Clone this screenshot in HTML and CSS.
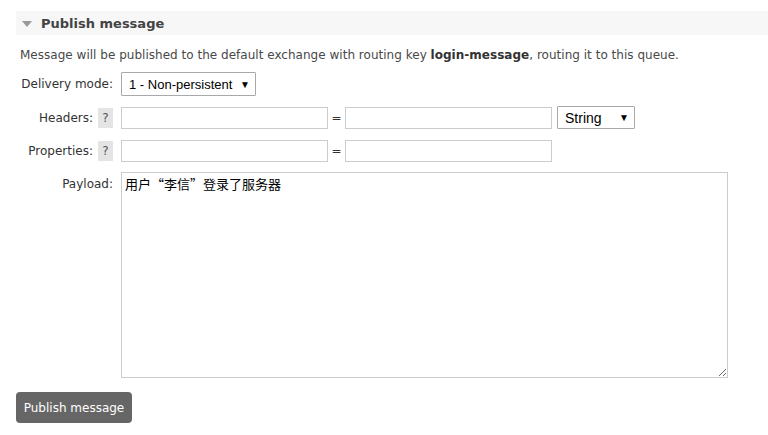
FILE: index.html
```html
<!DOCTYPE html>
<html>
<head>
<meta charset="utf-8">
<link rel="stylesheet" href="styles.css">
</head>
<body>
<div class="section">
  <div class="section-head">
    <span class="tri"></span>
    <h2>Publish message</h2>
  </div>
  <p class="intro">Message will be published to the default exchange with routing key <b>login-message</b>, routing it to this queue.</p>
  <div class="form">
    <div class="row row-mode">
      <label class="lbl">Delivery mode:</label>
      <div class="sel sel-mode"><span>1 - Non-persistent</span><span class="arr">&#9660;</span></div>
    </div>
    <div class="row row-hdr">
      <label class="lbl">Headers: <span class="help">?</span></label>
      <input class="txt" type="text">
      <span class="eq">=</span>
      <input class="txt" type="text">
      <div class="sel sel-type"><span>String</span><span class="arr">&#9660;</span></div>
    </div>
    <div class="row row-prop">
      <label class="lbl">Properties: <span class="help">?</span></label>
      <input class="txt" type="text">
      <span class="eq">=</span>
      <input class="txt" type="text">
    </div>
    <div class="row row-pay">
      <label class="lbl lbl-top">Payload:</label>
      <textarea class="payload">用户“李信”登录了服务器</textarea>
    </div>
  </div>
  <button class="btn">Publish message</button>
</div>
</body>
</html>
```
FILE: styles.css
```css
html, body { margin: 0; padding: 0; background: #fff; }
body {
  font-family: "DejaVu Sans", Verdana, sans-serif;
  font-size: 12px;
  color: #484848;
}
.section { padding: 11px 0 0 16px; }
.section-head {
  display: flex;
  align-items: center;
  height: 24px;
  background: #f7f7f7;
  padding-left: 6px;
}
.tri {
  width: 0; height: 0;
  border-left: 5px solid transparent;
  border-right: 5px solid transparent;
  border-top: 6px solid #999;
  margin-right: 9px;
  margin-top: 1px;
}
h2 {
  margin: 0;
  font-size: 13px;
  font-weight: bold;
  color: #444;
}
.intro {
  margin: 12px 0 0 4px;
  line-height: 16px;
  letter-spacing: 0.02px;
}
.intro b { color: #333; }
.form { margin-top: 9px; display: flex; flex-direction: column; }
.row { display: flex; align-items: center; }
.lbl {
  width: 97px;
  flex: none;
  text-align: right;
  color: #333;
  margin-right: 8px;
  display: flex;
  align-items: center;
  justify-content: flex-end;
}
.lbl-top { align-self: flex-start; margin-top: 5px; }
.help {
  display: inline-block;
  width: 15px; height: 20px;
  line-height: 20px;
  text-align: center;
  background: #e4e4e4;
  color: #555;
  margin-left: 5px;
}
.sel {
  box-sizing: border-box;
  display: flex;
  align-items: center;
  justify-content: space-between;
  border: 1px solid #a9a9a9;
  border-radius: 1px;
  background: #fff;
  font-family: "Liberation Sans", Arial, sans-serif;
  font-size: 13px;
  color: #000;
}
.sel-mode { width: 135px; height: 24px; padding: 0 5px 0 7px; }
.sel-type { width: 78px; height: 23px; padding: 0 5px 0 7px; margin-left: 5px; font-size: 14px; }
.arr { font-size: 10px; }
.row-mode { margin-top: 0; }
.row-hdr { margin-top: 10px; }
.row-prop { margin-top: 11px; }
.row-pay { margin-top: 10px; }
.txt {
  box-sizing: border-box;
  width: 207px;
  height: 22px;
  border: 1px solid #ccc;
  margin: 0;
  padding: 0 4px;
  font-size: 12px;
}
.eq { width: 17px; text-align: center; color: #333; }
.payload {
  box-sizing: border-box;
  width: 607px;
  height: 206px;
  margin: 0;
  border: 1px solid #ccc;
  padding: 2px 3px;
  font-family: "Noto Sans CJK SC", sans-serif;
  font-size: 13px;
  color: #000;
  line-height: 18px;
  resize: both;
}
.btn {
  margin-top: 14px;
  width: 116px;
  height: 31px;
  border: none;
  border-radius: 4px;
  background: #666;
  color: #fff;
  font-family: "DejaVu Sans", Verdana, sans-serif;
  font-size: 12px;
  padding: 0;
}
```
